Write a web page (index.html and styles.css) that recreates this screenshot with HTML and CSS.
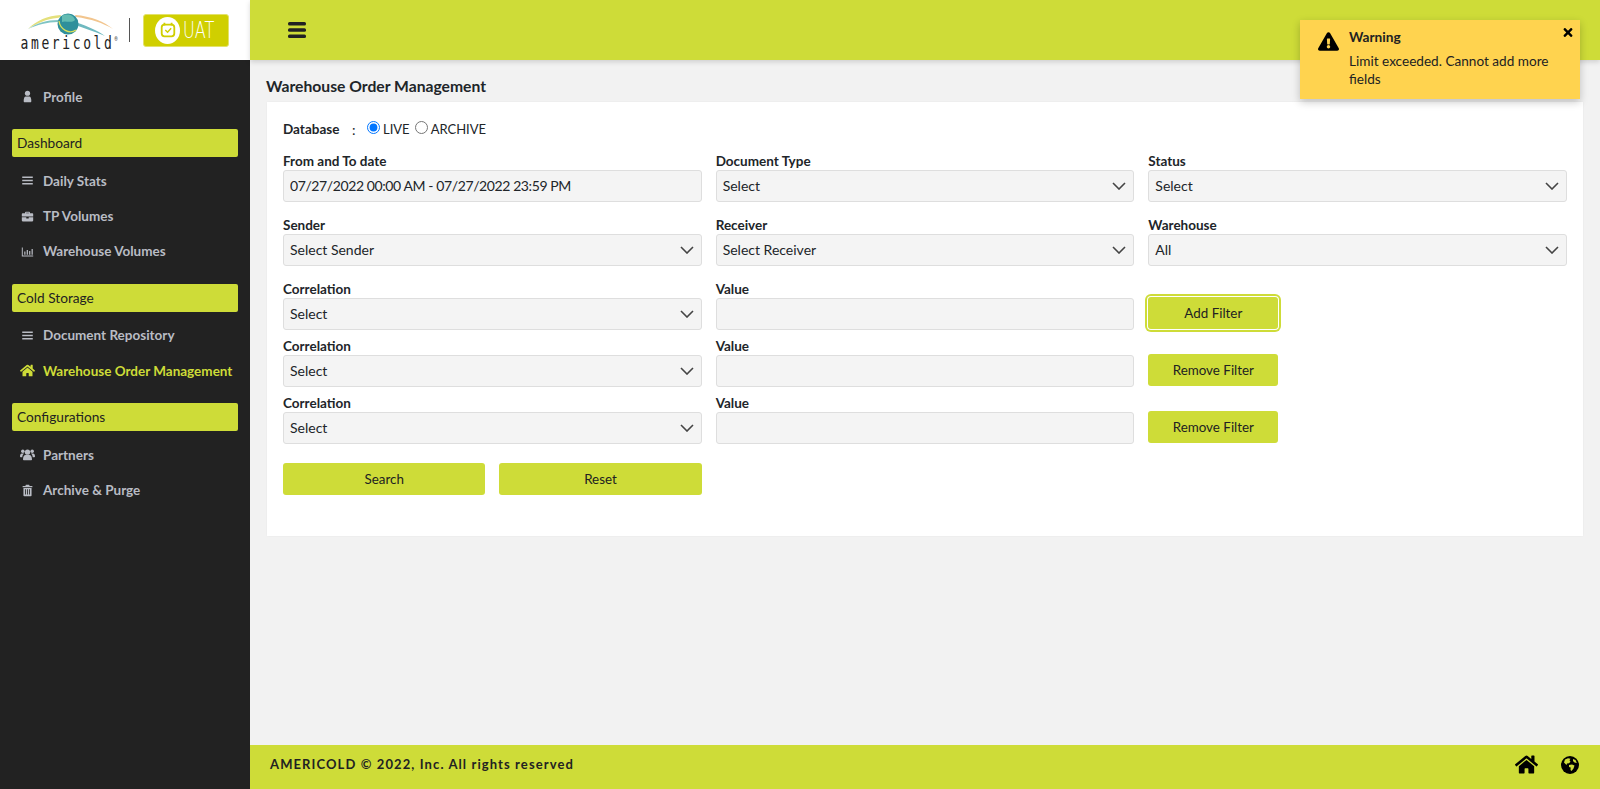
FILE: index.html
```html
<!DOCTYPE html>
<html lang="en">
  <head>
    <meta charset="UTF-8" />
    <meta name="viewport" content="width=device-width, initial-scale=1.0" />
    <title>Warehouse Order Management</title>
    <link rel="stylesheet" href="styles.css">
  </head>
  <body>
    <aside class="sidebar">
      <div class="logo-box">
        <div class="logo">
          <svg class="logo-globe" viewBox="0 0 96 24" width="96" height="24">
            <path d="M7 17 C16 8 26 4 40 3 C40 5 38 6 36 6 C26 7 16 11 7 17 Z" fill="#e4e07c"/>
            <path d="M7 17 C16 11 26 8 37 8 L37 10 C26 10 16 13 7 17 Z" fill="#7fc4c4"/>
            <path d="M54 3 C70 4 84 10 92 17 C82 11 70 7 55 5 Z" fill="#f2c58e"/>
            <path d="M50 9 C62 12 76 18 84 24 C74 20 62 15 49 12 Z" fill="#6fb9c0"/>
            <circle cx="47" cy="12" r="10.500" fill="#2f8f9b"/>
            <path d="M41 4 C46 1 53 3 54 8 C50 12 45 8 41 10 Z" fill="#63bcb2"/>
            <path d="M38 9 C39 17 48 23 55 18" fill="none" stroke="#dbe05a" stroke-width="1.300"/>
          </svg>
          <span class="logo-word">americold<sup>&reg;</sup></span>
        </div>
        <span class="logo-divider"></span>
        <div class="uat-badge">
          <span class="uat-icon">
            <svg viewBox="0 0 20 20" width="18" height="18">
              <rect x="3" y="4" width="14" height="13" rx="3" fill="none" stroke="#d0cf00" stroke-width="2"/>
              <path d="M6 2v3M14 2v3" stroke="#d0cf00" stroke-width="2"/>
              <path d="M7 10l2.500 2.500L13.500 8" fill="none" stroke="#d0cf00" stroke-width="1.600"/>
            </svg>
          </span>
          <span class="uat-text">UAT</span>
        </div>
      </div>

      <nav class="menu">
        <a class="menu-item">
          <svg class="menu-icon" viewBox="0 0 16 16"><circle cx="8" cy="4" r="3.200"/><path d="M4.500 15c-.8 0-1.200-.6-1.200-1.200C3.300 10.500 4 8 6 8h4c2 0 2.700 2.500 2.700 5.800 0 .6-.4 1.200-1.200 1.200z"/></svg>
          Profile
        </a>

        <div class="menu-section">Dashboard</div>
        <a class="menu-item">
          <svg class="menu-icon" viewBox="0 0 16 16"><path d="M1.500 3h13v2h-13zM1.500 7h13v2h-13zM1.500 11h13v2h-13z"/></svg>
          Daily Stats
        </a>
        <a class="menu-item">
          <svg class="menu-icon" viewBox="0 0 16 16"><path d="M5 4V3a1 1 0 0 1 1-1h4a1 1 0 0 1 1 1v1h3a1 1 0 0 1 1 1v3H1V5a1 1 0 0 1 1-1zm1.300 0h3.400V3.300H6.300zM1 9h5.500v1.500h3V9H15v4a1 1 0 0 1-1 1H2a1 1 0 0 1-1-1z"/></svg>
          TP Volumes
        </a>
        <a class="menu-item">
          <svg class="menu-icon" viewBox="0 0 16 16"><path d="M1 3h1.200v9.800H15V14H1zM4 8h1.500v4H4zM7 6h1.500v6H7zM10 7.500h1.500V12H10zM13 5h1.500v7H13z"/></svg>
          Warehouse Volumes
        </a>

        <div class="menu-section">Cold Storage</div>
        <a class="menu-item">
          <svg class="menu-icon" viewBox="0 0 16 16"><path d="M1.500 3h13v2h-13zM1.500 7h13v2h-13zM1.500 11h13v2h-13z"/></svg>
          Document Repository
        </a>
        <a class="menu-item active">
          <svg class="menu-icon menu-icon-wide" viewBox="0 0 576 512"><path d="M280.37 148.26L96 300.11V464a16 16 0 0 0 16 16l112.06-.29a16 16 0 0 0 15.92-16V368a16 16 0 0 1 16-16h64a16 16 0 0 1 16 16v95.64a16 16 0 0 0 16 16.05L464 480a16 16 0 0 0 16-16V300L295.67 148.26a12.19 12.19 0 0 0-15.3 0zM571.6 251.47L488 182.56V44.05a12 12 0 0 0-12-12h-56a12 12 0 0 0-12 12v72.61L318.47 43a48 48 0 0 0-61 0L4.34 251.47a12 12 0 0 0-1.6 16.9l25.5 31A12 12 0 0 0 45.15 301l235.22-193.74a12.19 12.19 0 0 1 15.3 0L530.9 301a12 12 0 0 0 16.9-1.6l25.5-31a12 12 0 0 0-1.7-16.93z"/></svg>
          Warehouse Order Management
        </a>

        <div class="menu-section">Configurations</div>
        <a class="menu-item">
          <svg class="menu-icon menu-icon-wide" viewBox="0 0 16 16"><circle cx="8" cy="5.500" r="2.800"/><circle cx="3" cy="4.500" r="1.900"/><circle cx="13" cy="4.500" r="1.900"/><path d="M4 14c-.5 0-.8-.3-.8-.8 0-2.700 1-4.700 2.800-4.700h4c1.800 0 2.800 2 2.800 4.700 0 .5-.3.8-.8.8zM0 10.200C0 8.300.8 7 2 7h2.300C3.200 8 2.600 9.200 2.400 11H.8c-.5 0-.8-.3-.8-.8zM16 10.200c0-1.900-.8-3.200-2-3.200h-2.300c1.100 1 1.700 2.200 1.900 4h1.600c.5 0 .8-.3.8-.8z"/></svg>
          Partners
        </a>
        <a class="menu-item">
          <svg class="menu-icon" viewBox="0 0 16 16"><path d="M6 1h4l.6 1.500H14V4H2V2.500h3.400zM3 5h10v9a1 1 0 0 1-1 1H4a1 1 0 0 1-1-1zm2 1.500V13h1V6.500zm2.500 0V13h1V6.500zm2.500 0V13h1V6.500z" fill-rule="evenodd"/></svg>
          Archive &amp; Purge
        </a>
      </nav>
    </aside>

    <div class="main">
      <header class="topbar">
        <svg class="hamburger" viewBox="0 0 18 16" width="18" height="16"><rect y="0" width="18" height="3.400" rx="1.500"/><rect y="6.300" width="18" height="3.400" rx="1.500"/><rect y="12.600" width="18" height="3.400" rx="1.500"/></svg>
      </header>

      <div class="content">
        <h1 class="page-title">Warehouse Order Management</h1>
        <form class="card">
          <div class="db-row">
            <span class="db-label">Database</span>
            <span class="db-colon">:</span>
            <label class="radio"><input type="radio" name="db" checked /> LIVE</label>
            <label class="radio"><input type="radio" name="db" /> ARCHIVE</label>
          </div>

          <div class="form-grid">
            <div class="field">
              <label>From and To date</label>
              <input class="date-input" type="text" value="07/27/2022 00:00 AM - 07/27/2022 23:59 PM" />
            </div>
            <div class="field">
              <label>Document Type</label>
              <select><option>Select</option></select>
            </div>
            <div class="field">
              <label>Status</label>
              <select><option>Select</option></select>
            </div>

            <div class="field">
              <label>Sender</label>
              <select><option>Select Sender</option></select>
            </div>
            <div class="field">
              <label>Receiver</label>
              <select><option>Select Receiver</option></select>
            </div>
            <div class="field">
              <label>Warehouse</label>
              <select><option>All</option></select>
            </div>
          </div>

          <div class="filter-grid">
            <div class="field">
              <label>Correlation</label>
              <select><option>Select</option></select>
            </div>
            <div class="field">
              <label>Value</label>
              <input type="text" />
            </div>
            <div class="field-action">
              <button type="button" class="btn btn-focus">Add Filter</button>
            </div>

            <div class="field">
              <label>Correlation</label>
              <select><option>Select</option></select>
            </div>
            <div class="field">
              <label>Value</label>
              <input type="text" />
            </div>
            <div class="field-action">
              <button type="button" class="btn">Remove Filter</button>
            </div>

            <div class="field">
              <label>Correlation</label>
              <select><option>Select</option></select>
            </div>
            <div class="field">
              <label>Value</label>
              <input type="text" />
            </div>
            <div class="field-action">
              <button type="button" class="btn">Remove Filter</button>
            </div>
          </div>

          <div class="form-actions">
            <button type="button" class="btn">Search</button>
            <button type="button" class="btn">Reset</button>
          </div>
        </form>
      </div>

      <footer class="footer">
        <span class="copyright">AMERICOLD &copy; 2022, Inc. All rights reserved</span>
        <div class="footer-icons">
          <svg viewBox="0 0 576 512" width="23" height="21"><path d="M280.37 148.26L96 300.11V464a16 16 0 0 0 16 16l112.06-.29a16 16 0 0 0 15.92-16V368a16 16 0 0 1 16-16h64a16 16 0 0 1 16 16v95.64a16 16 0 0 0 16 16.05L464 480a16 16 0 0 0 16-16V300L295.67 148.26a12.19 12.19 0 0 0-15.3 0zM571.6 251.47L488 182.56V44.05a12 12 0 0 0-12-12h-56a12 12 0 0 0-12 12v72.61L318.47 43a48 48 0 0 0-61 0L4.34 251.47a12 12 0 0 0-1.6 16.9l25.5 31A12 12 0 0 0 45.15 301l235.22-193.74a12.19 12.19 0 0 1 15.3 0L530.9 301a12 12 0 0 0 16.9-1.6l25.5-31a12 12 0 0 0-1.7-16.93z"/></svg>
          <svg viewBox="0 0 18 18" width="18" height="18">
            <circle cx="9" cy="9" r="9"/>
            <path d="M4 3.500l3-1.300 2.500.6-1 1.500 1 1.500-1.500 1.500-2 .2-.5 1.500L3 6.500z" fill="#cedc38"/>
            <path d="M8 9l3-.5 2.500 1-1 3-2 2.500-1-1 .2-2.500L8 11z" fill="#cedc38"/>
            <path d="M12 3l2.500 1 1.300 3-2.300-.5-1.500-1.500z" fill="#cedc38"/>
          </svg>
        </div>
      </footer>
    </div>

    <div class="toast">
      <svg class="toast-icon" viewBox="0 0 576 512" width="21" height="19"><path d="M569.517 440.013C587.975 472.007 564.806 512 527.94 512H48.054c-36.937 0-59.999-40.055-41.577-71.987L246.423 23.985c18.467-32.009 64.72-31.951 83.154 0l239.94 416.028zM288 354c-25.405 0-46 20.595-46 46s20.595 46 46 46 46-20.595 46-46-20.595-46-46-46zm-43.673-165.346l7.418 136c.347 6.364 5.609 11.346 11.982 11.346h48.546c6.373 0 11.635-4.982 11.982-11.346l7.418-136c.375-6.874-5.098-12.654-11.982-12.654h-63.383c-6.884 0-12.356 5.78-11.981 12.654z"/></svg>
      <div class="toast-body">
        <div class="toast-title">Warning</div>
        <div class="toast-text">Limit exceeded. Cannot add more fields</div>
      </div>
      <svg class="toast-close" viewBox="0 0 352 512" width="10" height="13"><path d="M242.72 256l100.07-100.07c12.28-12.28 12.28-32.19 0-44.48l-22.24-22.24c-12.28-12.28-32.19-12.28-44.48 0L176 189.28 75.93 89.21c-12.28-12.28-32.19-12.28-44.48 0L9.21 111.45c-12.28 12.28-12.28 32.19 0 44.48L109.28 256 9.21 356.07c-12.28 12.28-12.28 32.19 0 44.48l22.24 22.24c12.28 12.28 32.2 12.28 44.48 0L176 322.72l100.07 100.07c12.28 12.28 32.2 12.28 44.48 0l22.24-22.24c12.28-12.28 12.28-32.19 0-44.48L242.72 256z"/></svg>
    </div>
  </body>
</html>
```

FILE: styles.css
```css
* {
  box-sizing: border-box;
}

body {
  font-family: Lato, "Open Sans", sans-serif;
  font-size: 14px;
  color: #212529;
  background-color: #f2f2f2;
  margin: 0;
  height: 100vh;
  display: flex;
  overflow: hidden;
}

/* sidebar */
.sidebar {
  width: 250px;
  flex-shrink: 0;
  background-color: #222222;
}

.logo-box {
  height: 60px;
  background-color: white;
  display: flex;
  align-items: center;
  padding: 0 21px;
}

.logo {
  width: 96px;
  display: flex;
  flex-direction: column;
  align-items: center;
}

.logo-globe {
  display: block;
}

.logo-word {
  display: inline-block;
  font-family: "DejaVu Sans Mono", monospace;
  font-size: 13px;
  line-height: 13px;
  letter-spacing: 2.6px;
  color: #222222;
  white-space: nowrap;
  transform: scaleY(1.4);
}

.logo-word sup {
  font-size: 5px;
  line-height: 0;
  letter-spacing: 0;
}

.logo-divider {
  width: 1px;
  height: 24px;
  background-color: #555555;
  margin: 0 13px 0 12px;
}

.uat-badge {
  width: 86px;
  height: 33px;
  background-color: #d0cf00;
  border: 1px solid #e3e26a;
  border-radius: 3px;
  display: flex;
  align-items: center;
  padding-left: 11px;
  gap: 3px;
}

.uat-icon {
  width: 25px;
  height: 27px;
  border-radius: 50%;
  background-color: white;
  display: flex;
  align-items: center;
  justify-content: center;
}

.uat-text {
  font-family: "DejaVu Sans", sans-serif;
  font-size: 23px;
  font-weight: 200;
  line-height: 1;
  color: white;
  transform: scaleX(0.7);
  transform-origin: left center;
}

.menu {
  padding: 19px 12px 0;
}

.menu-item {
  display: flex;
  align-items: center;
  height: 35.3px;
  padding-left: 9px;
  font-size: 13.5px;
  font-weight: 700;
  color: #b9bcc4;
  white-space: nowrap;
}

.menu-icon {
  width: 13px;
  height: 13px;
  margin-right: 9px;
  flex-shrink: 0;
  fill: #b9bcc4;
}

.menu-icon-wide {
  width: 15px;
  height: 15px;
  margin-left: -1px;
  margin-right: 8px;
}

.menu-item.active {
  color: #cedc38;
}

.menu-item.active .menu-icon {
  fill: #cedc38;
}

.menu-section {
  height: 28px;
  line-height: 28px;
  margin: 15px 0 5.8px;
  padding-left: 5px;
  background-color: #cedc38;
  border-radius: 2px;
  color: #222222;
  font-size: 13.7px;
}

/* main area */
.main {
  flex: 1;
  min-width: 0;
  display: flex;
  flex-direction: column;
}

.topbar {
  height: 60px;
  flex-shrink: 0;
  background-color: #cedc38;
  box-shadow: 0 2px 5px rgba(0, 0, 0, 0.15);
  display: flex;
  align-items: center;
  padding-left: 38px;
}

.hamburger {
  fill: #222222;
}

.content {
  flex: 1;
  padding: 17px 17px 0;
}

.page-title {
  font-size: 15.7px;
  font-weight: 700;
  line-height: 18px;
  margin: 0 0 7px -1px;
  color: #212529;
}

.card {
  background-color: white;
  height: 434px;
  padding: 18px 16px 0;
  box-shadow: 0 0 2px rgba(0, 0, 0, 0.05);
}

.db-row {
  display: flex;
  align-items: center;
  height: 18px;
  margin-bottom: 14px;
}

.db-label {
  font-weight: 700;
  font-size: 13.5px;
  width: 69px;
}

.db-colon {
  width: 15px;
}

.radio {
  display: flex;
  align-items: center;
  gap: 3px;
  margin-right: 5px;
  font-size: 13px;
}

.radio input {
  margin: 0 0 3px;
  width: 13px;
  height: 13px;
}

.form-grid,
.filter-grid {
  display: grid;
  grid-template-columns: repeat(3, 1fr);
  column-gap: 14px;
}

.form-grid {
  row-gap: 14px;
  margin-bottom: 14px;
}

.filter-grid {
  row-gap: 7px;
}

.field label {
  display: block;
  font-size: 13.5px;
  font-weight: 700;
  line-height: 18px;
}

.field input,
.field select {
  display: block;
  width: 100%;
  height: 32px;
  padding: 0 6px 2px;
  border: 1px solid #dedede;
  border-radius: 3px;
  background-color: #f4f4f4;
  font-family: inherit;
  font-size: 14px;
  color: #212529;
}

.field .date-input {
  letter-spacing: -0.4px;
}

.field select {
  appearance: none;
  padding-right: 30px;
  background-image: url("data:image/svg+xml,%3Csvg xmlns='http://www.w3.org/2000/svg' viewBox='0 0 14 8'%3E%3Cpath d='M1 1l6 6 6-6' fill='none' stroke='%23444' stroke-width='1.600'/%3E%3C/svg%3E");
  background-repeat: no-repeat;
  background-position: right 7px center;
  background-size: 14px 8px;
}

.field-action {
  display: flex;
  align-items: flex-end;
  padding-bottom: 1px;
}

.btn {
  width: 130px;
  height: 32px;
  border: none;
  border-radius: 3px;
  background-color: #cedc38;
  color: #222222;
  font-family: inherit;
  font-size: 13.4px;
  padding: 0 0 1px;
}

.btn-focus {
  box-shadow: 0 0 0 1px white, 0 0 0 3px #cedc38;
}

.form-actions {
  width: calc((100% - 28px) / 3);
  display: grid;
  grid-template-columns: 1fr 1fr;
  column-gap: 14px;
  margin-top: 19px;
}

.form-actions .btn {
  width: 100%;
  padding-bottom: 1px;
}

/* footer */
.footer {
  height: 44px;
  flex-shrink: 0;
  background-color: #cedc38;
  display: flex;
  align-items: center;
  justify-content: space-between;
  padding: 0 21px 5px 20px;
}

.copyright {
  font-size: 13px;
  font-weight: 700;
  letter-spacing: 1.1px;
  color: #222222;
  margin-bottom: 1px;
}

.footer-icons {
  display: flex;
  align-items: center;
  gap: 23px;
}

/* warning toast over the header */
.toast {
  position: absolute;
  top: 20px;
  left: 1300px;
  width: 280px;
  height: 79px;
  background-color: #ffd34f;
  box-shadow: 0 3px 8px rgba(0, 0, 0, 0.22);
  display: flex;
  padding: 8px 7px 0 18px;
}

.toast-icon {
  flex-shrink: 0;
  margin: 4px 10px 0 0;
}

.toast-body {
  flex: 1;
  color: #222222;
}

.toast-title {
  font-size: 13.7px;
  font-weight: 700;
  line-height: 18px;
  margin-bottom: 6px;
}

.toast-text {
  font-size: 13.6px;
  line-height: 18px;
}

.toast-close {
  flex-shrink: 0;
  margin-top: -2px;
}
```
